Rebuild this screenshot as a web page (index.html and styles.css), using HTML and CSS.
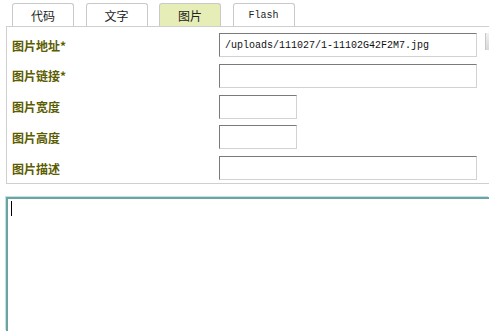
FILE: index.html
```html
<!DOCTYPE html>
<html lang="zh-CN">
<head>
  <meta charset="UTF-8" />
  <title>插入图片</title>
  <link rel="stylesheet" href="styles.css">
</head>
<body>
  <!-- tabs -->
  <div class="tabs">
    <div class="tab">代码</div>
    <div class="tab">文字</div>
    <div class="tab active">图片</div>
    <div class="tab latin">Flash</div>
  </div>

  <!-- image form -->
  <div class="panel">
    <div class="row">
      <label>图片地址*</label>
      <div class="field wide mono">/uploads/111027/1-11102G42F2M7.jpg</div>
      <div class="side-btn"></div>
    </div>
    <div class="row">
      <label>图片链接*</label>
      <div class="field wide"></div>
    </div>
    <div class="row">
      <label>图片宽度</label>
      <div class="field small"></div>
    </div>
    <div class="row">
      <label>图片高度</label>
      <div class="field small"></div>
    </div>
    <div class="row">
      <label>图片描述</label>
      <div class="field wide"></div>
    </div>
  </div>

  <div class="editor">
    <span class="caret"></span>
  </div>
</body>
</html>
```

FILE: styles.css
```css
* {
  box-sizing: border-box;
}

html, body {
  margin: 0;
  padding: 0;
  background: #fff;
  overflow: hidden;
  width: 489px;
  height: 332px;
}

body {
  font-family: "Noto Sans CJK SC", "Liberation Sans", sans-serif;
  font-size: 12px;
  color: #333;
}

.tabs {
  display: flex;
  gap: 11.5px;
  padding: 3px 0 0 12px;
  height: 26px;
}

.tab {
  width: 62px;
  height: 23px;
  border: 1px solid #c9c9c9;
  border-bottom: none;
  border-radius: 3px 3px 0 0;
  background: #fff;
  display: flex;
  align-items: center;
  justify-content: center;
  color: #222;
  font-size: 12px;
}

.tab.active {
  background: #e6edb6;
}

.tab.latin {
  font-family: "Liberation Mono", monospace;
  font-size: 10px;
}

.panel {
  margin-left: 6px;
  width: 483px;
  border: 1px solid #cfcfcf;
  border-right: none;
  padding: 6px 0 3px 5px;
  display: flex;
  flex-direction: column;
  gap: 6.75px;
}

.row {
  display: flex;
  align-items: center;
  height: 24px;
}

.row label {
  width: 207px;
  font-weight: bold;
  color: #5c5c00;
  font-size: 12px;
}

.field {
  height: 24px;
  border: 1px solid #d2d2d2;
  border-top-color: #7a7a7a;
  border-left-color: #7a7a7a;
  background: #fff;
  display: flex;
  align-items: center;
  padding-left: 5px;
}

.field.wide {
  width: 258px;
}

.field.small {
  width: 78px;
}

.mono {
  font-family: "Liberation Mono", monospace;
  font-size: 10px;
  color: #111;
}

.side-btn {
  margin-left: 8px;
  width: 4px;
  height: 17px;
  align-self: flex-start;
  background: linear-gradient(to bottom, #f0f0f0, #d8d8d8);
  border-left: 1px solid #c8c8c8;
}

.editor {
  margin: 13px 0 0 6px;
  width: 483px;
  height: 134px;
  border: 2px solid #6fa3a3;
  border-right: none;
  border-bottom: none;
  box-shadow: -1px -1px 0 #bfe6e6;
  padding: 2px 0 0 3px;
}

.caret {
  display: block;
  width: 1px;
  height: 15px;
  background: #000;
}
```
